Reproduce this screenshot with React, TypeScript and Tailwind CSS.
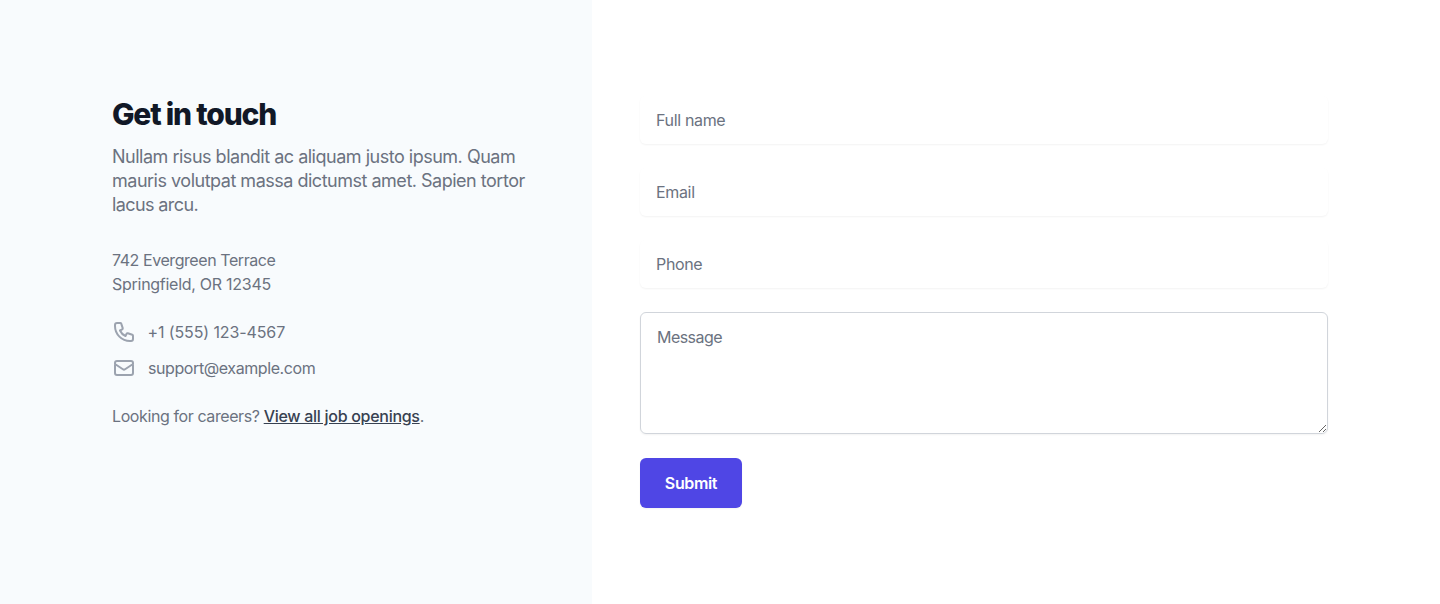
const field =
  "block w-full rounded-md px-4 py-3 text-base leading-6 tracking-[-0.34px] text-[#111827] placeholder:text-[#6b7280] shadow-[0_1px_2px_0_rgba(0,0,0,0.05)] outline-none";

function PhoneIcon() {
  return (
    <svg className="h-6 w-6 shrink-0 text-[#9ca3af]" fill="none" viewBox="0 0 24 24" stroke="currentColor" strokeWidth={2} aria-hidden="true">
      <path strokeLinecap="round" strokeLinejoin="round" d="M3 5a2 2 0 012-2h3.28a1 1 0 01.948.684l1.498 4.493a1 1 0 01-.502 1.21l-2.257 1.13a11.042 11.042 0 005.516 5.516l1.13-2.257a1 1 0 011.21-.502l4.493 1.498a1 1 0 01.684.949V19a2 2 0 01-2 2h-1C9.716 21 3 14.284 3 6V5z" />
    </svg>
  );
}

function EnvelopeIcon() {
  return (
    <svg className="h-6 w-6 shrink-0 text-[#9ca3af]" fill="none" viewBox="0 0 24 24" stroke="currentColor" strokeWidth={2} aria-hidden="true">
      <path strokeLinecap="round" strokeLinejoin="round" d="M3 8l7.89 5.26a2 2 0 002.22 0L21 8M5 19h14a2 2 0 002-2V7a2 2 0 00-2-2H5a2 2 0 00-2 2v10a2 2 0 002 2z" />
    </svg>
  );
}

export default function App() {
  return (
    <div className="flex h-[604px] bg-white font-['Inter',sans-serif] text-base leading-6 text-[#6b7280]">
      <section className="w-[592px] shrink-0 bg-[#f8fbfd] pt-24 pl-28 pr-12">
        <h2 className="text-3xl leading-9 font-extrabold tracking-[-1.2px] text-[#111827]">Get in touch</h2>
        <p className="mt-[13px] text-lg leading-6 tracking-[-0.49px]">
          Nullam risus blandit ac aliquam justo ipsum. Quam mauris volutpat massa dictumst amet. Sapien tortor{" "}
          <span className="tracking-[-0.6px]">lacus arcu.</span>
        </p>
        <dl className="mt-[31px]">
          <dd>
            <p className="tracking-[-0.43px]">742 Evergreen Terrace</p>
            <p className="tracking-[-0.27px]">Springfield, OR 12345</p>
          </dd>
          <dd className="mt-6 flex tracking-[-0.11px]">
            <PhoneIcon />
            <span className="ml-[11.5px]">+1 (555) 123-4567</span>
          </dd>
          <dd className="mt-3 flex tracking-[-0.41px]">
            <EnvelopeIcon />
            <span className="ml-3">support@example.com</span>
          </dd>
        </dl>
        <p className="mt-6 tracking-[-0.4px]">
          Looking for careers?{" "}
          <a href="#" className="font-medium tracking-[-0.29px] text-[#374151] underline">View all job openings</a>.
        </p>
      </section>
      <section className="flex-1 pt-24 pr-28 pl-12">
        <form className="grid gap-y-6" onSubmit={(event) => event.preventDefault()}>
          <input type="text" className={field} placeholder="Full name" />
          <input type="email" className={field} placeholder="Email" />
          <input type="text" className={field} placeholder="Phone" />
          <textarea
            rows={4}
            className="block w-full rounded-md border border-[#d1d5db] px-4 py-3 text-base leading-6 tracking-[-0.55px] text-[#111827] shadow-[0_1px_2px_0_rgba(0,0,0,0.05)] outline-none placeholder:text-[#6b7280]"
            placeholder="Message"
          />
          <div>
            <button type="submit" className="inline-flex w-[102px] justify-center rounded-md border border-transparent bg-[#4f46e5] px-6 py-3 text-base leading-6 font-semibold tracking-[-0.35px] text-white shadow-[0_1px_2px_0_rgba(0,0,0,0.05)]">
              Submit
            </button>
          </div>
        </form>
      </section>
    </div>
  );
}
